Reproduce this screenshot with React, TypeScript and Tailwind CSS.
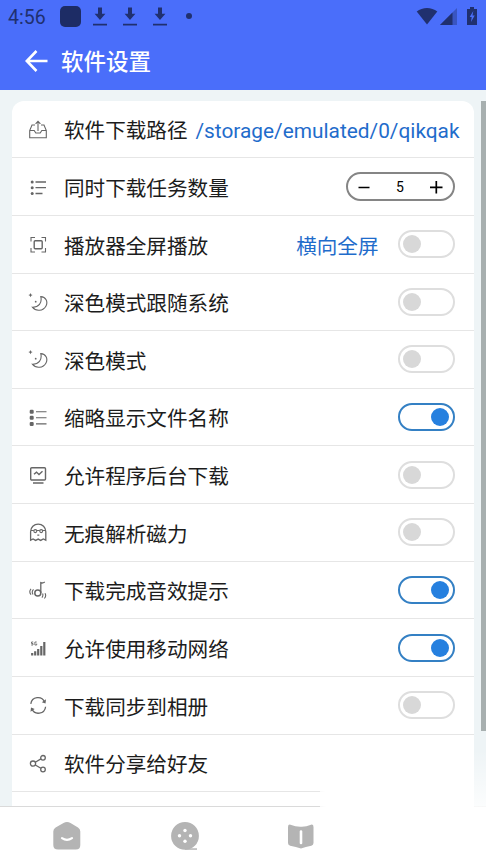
import { useState } from 'react'
import type { ReactNode } from 'react'
import clsx from 'clsx'

type IconName = 'inbox' | 'list' | 'frame' | 'moon' | 'bullets' | 'monitor' | 'ghost' | 'sound' | 'signal' | 'sync' | 'share'

// All row icons share a 20x20 grid
const icons: Record<IconName, ReactNode> = {
  inbox: (
    <>
      <path d="M7 6H4L1.700 11.500v7.200h16.600v-7.200L16 6h-3M1.700 11.500h4.500L7.800 14h4.400l1.600-2.500h4.500" />
      <path d="M10 12V2.500M7.600 4.900 10 2.300l2.400 2.600" />
    </>
  ),
  list: (
    <>
      <path d="M7.500 5h10.500M7.500 10.700h10.500M7.500 16.500h7" strokeWidth="1.300" />
      <g fill="currentColor" stroke="none">
        <circle cx="4.200" cy="5" r="1.500" />
        <circle cx="4.200" cy="10.700" r="1.500" />
        <circle cx="4.200" cy="16.500" r="1.500" />
      </g>
    </>
  ),
  frame: (
    <>
      <path d="M3 7.500v-4h4M13.500 3.500h4v4M17.500 14v4h-4M7 18H3v-4" />
      <rect x="6.200" y="6.700" width="8" height="8" rx="1" strokeWidth="1.400" />
    </>
  ),
  moon: (
    <>
      <path d="M12.800 4.600C17.800 5 20.200 9.600 18 13.900c-2.800 5.300-10.200 5.800-13.600 1.300 6.200.2 9.900-4.200 8.400-10.600Z" />
      <g fill="currentColor" stroke="none">
        <path d="m2.500 1 .7 1.400 1.400.7-1.400.7-.7 1.400-.7-1.400-1.400-.7 1.400-.7Z" />
        <circle cx="7.700" cy="9.700" r=".9" />
      </g>
    </>
  ),
  bullets: (
    <>
      <path d="M8 4.700h10.500M8 10.700h10.500M8 16.900h10.500" />
      <g fill="currentColor" stroke="none">
        <rect x="1.700" y="2.700" width="4" height="4" rx="1.200" />
        <rect x="1.700" y="8.700" width="4" height="4" rx="1.200" />
        <rect x="1.700" y="14.900" width="4" height="4" rx="1.200" />
      </g>
    </>
  ),
  monitor: (
    <>
      <rect x="2.700" y="2.700" width="14.800" height="12.300" rx="1" strokeWidth="1.400" />
      <path d="m6 9.300 2.500-2.200 2.500 2.500 3.500-3.300M5 18h10.500" strokeWidth="1.400" />
    </>
  ),
  ghost: (
    <>
      <path d="M2.600 18.200V9.700a7.600 7.600 0 0 1 15.200 0v8.500l-2.500-1.300-2.600 1.500-2.500-1.300-2.600 1.300-2.500-1.500Z" strokeWidth="1.300" />
      <path d="M3 8.500h2.800M8.800 8.500h2.900M14.700 8.500h2.800M9.300 13.100h2" />
      <circle cx="7.300" cy="9.100" r="1.500" />
      <circle cx="13.200" cy="9.100" r="1.500" />
    </>
  ),
  sound: (
    <>
      <circle cx="9.800" cy="13" r="3" strokeWidth="1.500" />
      <path d="M12.800 13V2.700c1.200.6 2.400.4 4-.7" strokeWidth="1.300" />
      <path d="M5.500 9.300c-1.500 1.500-1.500 3.500-.5 5.200M3 8.800c-1.500 1.800-1.500 4 0 5.800M14.600 13.500c.6 1.500.3 3-.7 4.200M17 13.200c1 1.800.7 3.900-.6 5.300" />
    </>
  ),
  signal: (
    <>
      <path d="M4.200 17.500V15M7.200 17.500v-4.200M10.200 17.500v-6.500M13.300 17.500V8M16.300 17.500V4" strokeWidth="2.200" />
      <path d="M5.200 4H3.500v1.500H5V7H3.200M8.700 4H6.900v3h1.800V5.600" strokeWidth=".9" />
    </>
  ),
  sync: (
    <>
      <path d="M2.800 8.900a7.200 7.200 0 0 1 13.800-1.800M17.600 11.800a7.200 7.200 0 0 1-13.800 2" strokeWidth="1.300" />
      <path d="m18 4.300-.5 4.200-3.700-1.300ZM2.500 16.800l.5-4.400 3.700 1.600Z" fill="currentColor" stroke="none" />
    </>
  ),
  share: (
    <>
      <circle cx="5" cy="10.600" r="2.600" strokeWidth="1.300" />
      <circle cx="15" cy="4.800" r="2.300" strokeWidth="1.300" />
      <circle cx="15" cy="16.500" r="2.300" strokeWidth="1.300" />
      <path d="m7.300 9.200 5.600-3.300M7.300 12l5.600 3.300" strokeWidth="1.300" />
    </>
  ),
}

function RowIcon({ name }: { name: IconName }) {
  return (
    <svg viewBox="0 0 20 20" className="size-5 shrink-0 text-[#666]" fill="none" stroke="currentColor" strokeWidth="1.100">
      {icons[name]}
    </svg>
  )
}

function Switch({ initial }: { initial: boolean }) {
  const [on, setOn] = useState(initial)
  return (
    <button
      role="switch"
      aria-checked={on}
      onClick={() => setOn(!on)}
      className={clsx(
        'flex h-7 w-[57px] shrink-0 items-center rounded-full border-2 pl-[3px] pr-1',
        on ? 'justify-end border-[#3480c4]' : 'border-[#dedede]'
      )}
    >
      <span className={clsx('size-[18px] rounded-full', on ? 'bg-[#2680df]' : 'bg-[#d8d8d8]')} />
    </button>
  )
}

function Stepper() {
  const [count, setCount] = useState(5)
  return (
    <div className="flex h-[29px] w-[109px] items-center justify-between rounded-full border-2 border-[#858585] px-2.5 text-black">
      <button onClick={() => setCount(Math.max(1, count - 1))}>
        <svg viewBox="0 0 14 14" className="size-3.5" stroke="currentColor" strokeWidth="1.500">
          <path d="M.5 7.500h11" />
        </svg>
      </button>
      <span className="pt-px font-['Roboto',sans-serif] text-sm">{count}</span>
      <button onClick={() => setCount(count + 1)}>
        <svg viewBox="0 0 14 14" className="size-3.5" stroke="currentColor" strokeWidth="1.700">
          <path d="M1 7.300h12.500M7.300 1v12.500" />
        </svg>
      </button>
    </div>
  )
}

interface Setting {
  icon: IconName
  label: string
  on?: boolean
  value?: string
  stepper?: boolean
}

const settings: Setting[] = [
  { icon: 'inbox', label: '软件下载路径', value: '/storage/emulated/0/qikqak' },
  { icon: 'list', label: '同时下载任务数量', stepper: true },
  { icon: 'frame', label: '播放器全屏播放', value: '横向全屏', on: false },
  { icon: 'moon', label: '深色模式跟随系统', on: false },
  { icon: 'moon', label: '深色模式', on: false },
  { icon: 'bullets', label: '缩略显示文件名称', on: true },
  { icon: 'monitor', label: '允许程序后台下载', on: false },
  { icon: 'ghost', label: '无痕解析磁力', on: false },
  { icon: 'sound', label: '下载完成音效提示', on: true },
  { icon: 'signal', label: '允许使用移动网络', on: true },
  { icon: 'sync', label: '下载同步到相册', on: false },
  { icon: 'share', label: '软件分享给好友' },
]

function SettingRow({ icon, label, on, value, stepper }: Setting) {
  return (
    <div className={clsx('flex h-[57.650px] shrink-0 items-center border-b border-[#e6e6e6] pl-4', value && on === undefined ? 'pr-[14.500px]' : 'pr-[19.500px]')}>
      <RowIcon name={icon} />
      <span className="ml-4 whitespace-nowrap pt-[5.500px] text-[20.600px] text-[#1c1c1c]">{label}</span>
      <div className="ml-auto flex items-center gap-[19px] text-[#1f6ccb]">
        {value && (
          <span className={clsx('whitespace-nowrap', on === undefined ? 'pt-[5px] text-[20.850px]' : 'pt-[5.500px] text-[20.600px]')}>
            {value}
          </span>
        )}
        {stepper && <Stepper />}
        {on !== undefined && <Switch initial={on} />}
      </div>
    </div>
  )
}

function DownloadGlyph() {
  return (
    <svg viewBox="0 0 16 20" className="h-5 w-4" fill="currentColor">
      <path d="M6 1.500h4v6.300h3.400L8 14 2.600 7.800H6ZM1 17.700h14v1.800H1Z" />
    </svg>
  )
}

function StatusBar() {
  return (
    <div className="flex h-8 items-center pl-2 pr-2 text-[#20306f]">
      <span className="w-[52px] pt-1 text-[19.500px]">4:56</span>
      <div className="size-[21px] rounded-[5px] bg-[#1d2c65]" />
      <div className="ml-[11px] flex gap-3.5">
        <DownloadGlyph />
        <DownloadGlyph />
        <DownloadGlyph />
      </div>
      <div className="ml-[18px] size-1.5 rounded-full bg-current" />
      <svg viewBox="0 0 22 18" className="ml-auto h-[18px] w-[22px]" fill="currentColor">
        <path d="M.7 4.500C6.500-.3 15.500-.3 21.300 4.500L11 17.500Z" />
      </svg>
      <svg viewBox="0 0 17 17" className="ml-0.5 h-[17px] w-[17px]" fill="currentColor">
        <path d="M17 0v17H0Z" opacity=".4" />
        <path d="M12.500 4.500V17H0Z" />
      </svg>
      <svg viewBox="0 0 10 18" className="ml-2.5 mr-px h-[18px] w-2.5">
        <path d="M3 0h4v2h3v16H0V2h3Z" fill="currentColor" />
        <path d="M6.300 4 2.700 10h2l-.7 5 3.700-6.400H5.500Z" fill="#4a6efa" />
      </svg>
    </div>
  )
}

function TabBar() {
  return (
    <nav className="flex h-[58px] shrink-0 items-center border-t border-[#dadada] bg-white pl-[52px] text-[#b4b4b4]">
      <svg viewBox="0 0 30 30" className="size-[30px]">
        <path d="M11.500 2q3.500-2 7 0l7.500 4.600q2.300 1.400 2.300 4V24q0 4.500-4.500 4.500H6Q1.300 28.500 1.300 24V10.600q0-2.600 2.300-4Z" fill="currentColor" />
        <path d="M10 17.200q5 3.300 10 0" fill="none" stroke="white" strokeWidth="2.200" strokeLinecap="round" />
      </svg>
      <svg viewBox="0 0 30 30" className="ml-[88px] size-[30px]">
        <path d="M15 1a13.900 13.900 0 1 1 0 27.800A13.900 13.900 0 0 1 15 1Z" fill="currentColor" />
        <path d="M15 27.300h12v1.500H15Z" fill="currentColor" />
        <g fill="white">
          <circle cx="15" cy="9.500" r="1.700" />
          <circle cx="9.500" cy="14.800" r="1.700" />
          <circle cx="20.500" cy="14.800" r="1.700" />
          <circle cx="15" cy="20.300" r="1.700" />
        </g>
      </svg>
      <svg viewBox="0 0 30 30" className="ml-[86px] size-[30px]">
        <path d="M2 6Q2 3.200 4.500 3.700 10 5.900 15 5.700q5 .2 10-2Q27.500 3.200 27.500 6V22q0 2.200-2.200 2.700-5.800 1-10.300 2.800Q10 25.700 4.200 24.700 2 24.200 2 22Z" fill="currentColor" />
        <path d="M15 10.500v11.500" stroke="white" strokeWidth="2.600" strokeLinecap="round" />
      </svg>
    </nav>
  )
}

export default function App() {
  return (
    <div className="relative flex h-[864px] w-[486px] flex-col overflow-hidden bg-[#eef4f6] font-['Roboto','Noto_Sans_CJK_SC',sans-serif]">
      <header className="h-[90px] shrink-0 bg-[#4a6efa]">
        <StatusBar />
        <div className="flex h-[58px] items-center pl-[25px] text-white">
          <svg viewBox="0 0 24 24" className="size-6" fill="none" stroke="currentColor" strokeWidth="2.600">
            <path d="M22.500 12H2M11.500 2 1.800 12l9.700 10" />
          </svg>
          <h1 className="ml-3 pt-[3px] text-[22.500px] font-medium">软件设置</h1>
        </div>
      </header>

      <main className="flex min-h-0 flex-1 justify-between overflow-hidden pl-3 pt-[10.600px]">
        <div className="flex w-[462px] flex-col overflow-hidden rounded-t-xl bg-white">
          {settings.map(s => (
            <SettingRow key={s.label} {...s} />
          ))}
        </div>
        <div className="h-[630px] w-[5px] bg-[#a7afaf]" />
      </main>

      <TabBar />

      {/* White fade over the bottom right corner */}
      <div className="absolute bottom-0 right-3 h-[84px] w-[154px] bg-linear-to-r from-white/80 to-white to-[6px]" />
      <div className="absolute bottom-0 right-0 h-[114px] w-3 bg-linear-to-b from-transparent to-white to-[70px]" />
    </div>
  )
}
